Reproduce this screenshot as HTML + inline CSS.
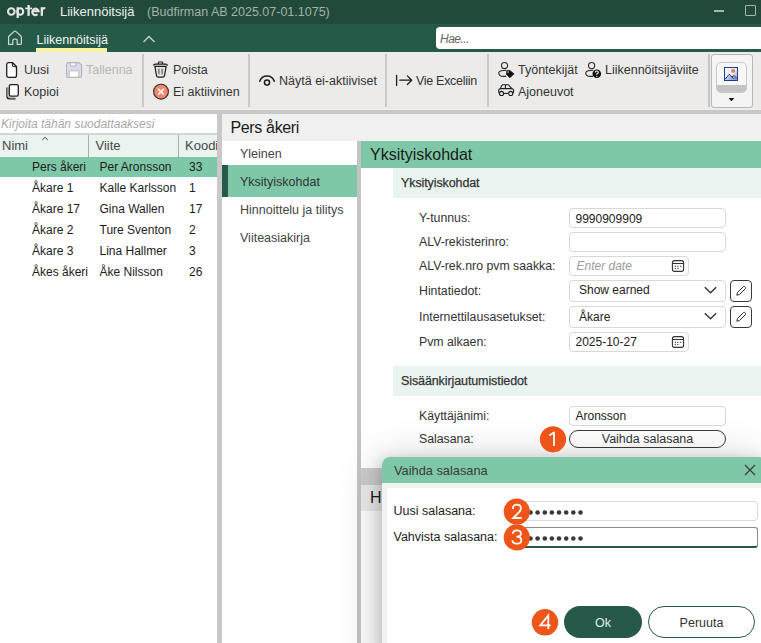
<!DOCTYPE html>
<html><head><meta charset="utf-8">
<style>
*{box-sizing:border-box;margin:0;padding:0}
html,body{width:761px;height:643px;overflow:hidden;background:#fff}
body{position:relative;font-family:"Liberation Sans",sans-serif;font-size:12.5px;color:#333}
.a{position:absolute;white-space:nowrap}
.t{position:absolute;white-space:nowrap;line-height:1}
.f12{font-size:12px}
.med{-webkit-text-stroke:0.25px currentColor;letter-spacing:-0.1px}
.inp{border:1px solid #d8d8d8;border-radius:4px;background:#fff}
</style></head><body>

<!-- TITLE BAR -->
<div class="a" style="left:0;top:0;width:761px;height:24px;background:#214a3b"></div>
<svg class="a" style="left:4px;top:2px" width="46" height="20" viewBox="4 2 46 20"><g fill="none" stroke="#e6e6e6" stroke-width="2.1"><circle cx="11.3" cy="11.5" r="3.3"/><path d="M17.7 7.2V18" stroke-width="2.3"/><ellipse cx="20.3" cy="11.5" rx="2.9" ry="3.3"/><path d="M28.6 5V15.9" stroke-width="2.3"/><path d="M25.2 8.4H32" stroke-width="1.7"/><path d="M32.3 11.3H38.6A3.2 3.25 0 1 0 37.6 14.3"/><path d="M41.8 7.2V15.9" stroke-width="2.3"/><path d="M41.8 10.6Q42.3 7.8 45.3 7.9" stroke-width="2"/></g></svg>
<div class="t" style="left:60px;top:5px;font-size:13px;color:#eef2f0">Liikennöitsijä</div>
<div class="t" style="left:147px;top:6px;font-size:12.5px;color:#a3b3ac">(Budfirman AB 2025.07-01.1075)</div>
<div class="a" style="left:714px;top:10px;width:10px;height:2px;background:#a9b5b0"></div>
<div class="a" style="left:745px;top:5px;width:11px;height:11px;border:1.6px solid #a9b5b0;border-radius:1px"></div>

<!-- TAB BAR -->
<div class="a" style="left:0;top:24px;width:761px;height:28px;background:#265a48"></div>
<svg class="a" style="left:0;top:24px" width="30" height="28" viewBox="0 24 30 28"><path d="M8.6 44.4V37.2Q8.6 36.5 9.1 36L14.2 31.4Q15 30.8 15.8 31.4L20.9 36Q21.4 36.5 21.4 37.2V43.6Q21.4 44.4 20.6 44.4H17.2V40.5Q17.2 39.2 16 39.2H14Q12.8 39.2 12.8 40.5V44.4H9.4Q8.6 44.4 8.6 43.6Z" fill="none" stroke="#cdd5d1" stroke-width="1.25" stroke-linejoin="round"/></svg>
<div class="t" style="left:36.5px;top:34px;font-size:12.5px;color:#f3f6f4">Liikennöitsijä</div>
<div class="a" style="left:36px;top:48px;width:71px;height:4px;background:#f6f3a6"></div>
<svg class="a" style="left:142px;top:34px" width="14" height="10" viewBox="0 0 14 10"><path d="M1.5 8L7 2.5 12.5 8" fill="none" stroke="#c9d3cf" stroke-width="1.3"/></svg>
<div class="a" style="left:436px;top:27px;width:340px;height:22px;background:#fff;border-radius:4px"></div>
<div class="t" style="left:440px;top:33px;font-size:12px;font-style:italic;letter-spacing:-0.5px;color:#666">Hae...</div>

<!-- RIBBON -->
<div class="a" style="left:0;top:52px;width:761px;height:57px;background:#ecebea"></div>
<div class="a" style="left:0;top:109px;width:761px;height:1px;background:#f1f1f0"></div>
<div class="a" style="left:0;top:110px;width:761px;height:4px;background:#c9c8c6"></div>


<!-- ribbon items -->
<svg class="a" style="left:0;top:52px" width="140" height="57" viewBox="0 52 140 57">
<path d="M8.4 62.7H12.6L16.5 66.6V75.4Q16.5 77.3 14.6 77.3H8.6Q6.7 77.3 6.7 75.4V64.6Q6.7 62.7 8.4 62.7Z" fill="#fff" stroke="#1e1e1e" stroke-width="1.3"/>
<path d="M12.4 62.9V65Q12.4 66.8 14.3 66.8H16.3" fill="none" stroke="#1e1e1e" stroke-width="1.1"/>
<path d="M6.9 87.5V96.2Q6.9 98.9 9.6 98.9H15.6" fill="none" stroke="#1e1e1e" stroke-width="1.2"/>
<path d="M8 88V95.6Q8 97.8 10.2 97.8H14.8" fill="none" stroke="#9a9a9a" stroke-width="0.9"/>
<rect x="9.3" y="84.6" width="9" height="11.6" rx="1.6" fill="#fff" stroke="#1e1e1e" stroke-width="1.3"/>
<path d="M68.2 62.6H79L81.6 65.2V75.8Q81.6 77.5 79.9 77.5H68.2Q66.5 77.5 66.5 75.8V64.3Q66.5 62.6 68.2 62.6Z" fill="#dcd9f0" stroke="#b4b4b4" stroke-width="1.1"/>
<rect x="70.6" y="62.9" width="5.2" height="3" fill="#fff" stroke="#b4b4b4" stroke-width="0.9"/>
<rect x="69.3" y="70.8" width="9.6" height="6.4" rx="0.8" fill="#fff" stroke="#b4b4b4" stroke-width="0.9"/>
</svg>
<div class="t" style="left:24px;top:64px;color:#333">Uusi</div>
<div class="t" style="left:86px;top:64px;color:#b6b6b6">Tallenna</div>
<div class="t" style="left:24px;top:86px;color:#333">Kopioi</div>

<div class="a" style="left:142px;top:54px;width:2px;height:53px;background:#c9c9c9"></div>

<svg class="a" style="left:150px;top:58px" width="22" height="44" viewBox="150 58 22 44">
<path d="M154.9 66.3L156.4 75.4Q156.7 77.1 158.4 77.1H162.6Q164.3 77.1 164.6 75.4L166.1 66.3Z" fill="#e2e2e2" stroke="#1e1e1e" stroke-width="1.2" stroke-linejoin="round"/>
<path d="M153.6 65.6Q153.8 64.1 155.4 64.1H165.6Q167.2 64.1 167.4 65.6" fill="none" stroke="#1e1e1e" stroke-width="1.3"/>
<path d="M158.3 64V62.8Q158.3 62 159.1 62H161.9Q162.7 62 162.7 62.8V64" fill="none" stroke="#1e1e1e" stroke-width="1.1"/>
<path d="M158.9 68.8V74.2M162.1 68.8V74.2" stroke="#555" stroke-width="1.1"/>
<circle cx="161" cy="91.7" r="7.4" fill="#f5896b" stroke="#2a2a2a" stroke-width="1.1"/>
<path d="M158.2 88.9L163.8 94.5M163.8 88.9L158.2 94.5" stroke="#fff" stroke-width="1.5"/>
</svg>
<div class="t" style="left:173px;top:64px;color:#333">Poista</div>
<div class="t" style="left:173px;top:86px;color:#333">Ei aktiivinen</div>

<div class="a" style="left:248px;top:54px;width:2px;height:53px;background:#c9c9c9"></div>

<svg class="a" style="left:255px;top:65px" width="40" height="30" viewBox="255 65 40 30">
<path d="M259.7 81.2A7.72 7.72 0 0 1 274.3 81.2" fill="none" stroke="#1e1e1e" stroke-width="1.5" stroke-linecap="round"/>
<circle cx="267" cy="82.6" r="2.55" fill="none" stroke="#1e1e1e" stroke-width="1.5"/>
</svg>
<div class="t" style="left:279px;top:75px;color:#333">Näytä ei-aktiiviset</div>

<div class="a" style="left:385px;top:54px;width:2px;height:53px;background:#c9c9c9"></div>

<svg class="a" style="left:390px;top:65px" width="26" height="30" viewBox="390 65 26 30">
<path d="M396.6 75.4V85.4" stroke="#1e1e1e" stroke-width="1.3" stroke-linecap="round"/>
<path d="M399.8 80.2H411.6M407.4 75.9L411.7 80.2 407.4 84.5" fill="none" stroke="#1e1e1e" stroke-width="1.3" stroke-linecap="round" stroke-linejoin="round"/>
</svg>
<div class="t" style="left:416px;top:75px;letter-spacing:-0.3px;color:#333">Vie Exceliin</div>

<div class="a" style="left:487px;top:54px;width:2px;height:53px;background:#c9c9c9"></div>

<svg class="a" style="left:494px;top:58px" width="112" height="42" viewBox="494 58 112 42">
<circle cx="504.5" cy="65.6" r="3.05" fill="none" stroke="#2a2a2a" stroke-width="1.1"/>
<path d="M506.3 70.3Q500 70.4 498.9 72.2Q498.3 74 499.7 75.3Q500.9 76.4 503.5 76.4H506.3" fill="none" stroke="#2a2a2a" stroke-width="1.1"/>
<path d="M506.9 70.8H510L513.6 73.9 509.8 77.4 506.8 74.2Z" fill="#111" stroke="#111" stroke-width="1.1" stroke-linejoin="round"/>
<circle cx="508.1" cy="72" r="0.75" fill="#eee"/>
<circle cx="591.6" cy="65.6" r="3.1" fill="none" stroke="#2a2a2a" stroke-width="1.1"/>
<path d="M593.3 70.3Q587 70.4 585.9 72.2Q585.3 74 586.7 75.3Q587.9 76.4 590.5 76.4H593" fill="none" stroke="#2a2a2a" stroke-width="1.1"/>
<circle cx="596.8" cy="73.8" r="4.3" fill="#111"/>
<path d="M595.3 72.6Q595.3 71 596.8 71Q598.3 71 598.3 72.4Q598.3 73.3 596.8 73.9V74.8" fill="none" stroke="#fff" stroke-width="1.1"/>
<circle cx="596.8" cy="76.3" r="0.65" fill="#fff"/>
<path d="M500.4 88.6L501.6 85.8Q502.1 84.7 503.2 84.7H507.8Q508.9 84.7 509.4 85.8L511.8 88.6" fill="none" stroke="#1e1e1e" stroke-width="1.1" stroke-linejoin="round"/>
<path d="M505.4 84.8V88.6" stroke="#1e1e1e" stroke-width="1.1"/>
<path d="M499.2 93.2Q498.7 92.6 498.7 91.6V90.6Q498.7 88.6 500.8 88.6H511.4Q513.6 88.6 513.6 90.6V91.6Q513.6 92.6 513.1 93.2" fill="none" stroke="#1e1e1e" stroke-width="1.1"/>
<path d="M503.6 93.4H508.6" stroke="#1e1e1e" stroke-width="1.1"/>
<circle cx="501.5" cy="93.4" r="2.05" fill="#ededed" stroke="#1e1e1e" stroke-width="1.1"/>
<circle cx="510.7" cy="93.4" r="2.05" fill="#ededed" stroke="#1e1e1e" stroke-width="1.1"/>
</svg>
<div class="t" style="left:518px;top:64px;color:#333">Työntekijät</div>
<div class="t" style="left:605px;top:64px;color:#333">Liikennöitsijäviite</div>
<div class="t" style="left:518px;top:86px;color:#333">Ajoneuvot</div>

<div class="a" style="left:708px;top:54px;width:1.5px;height:53px;background:#c4c4c4"></div>
<div class="a" style="left:711px;top:54px;width:42px;height:54px;background:#f4f4f4;border:1px solid #b8b8b8;border-radius:3px"></div>
<div class="a" style="left:716px;top:62px;width:31px;height:31px;border-radius:5px;border:1px solid #c8c8c8;background:linear-gradient(#f7f7f7 0,#f7f7f7 22px,#c4c4c4 22px,#c4c4c4 100%)"></div>
<svg class="a" style="left:720px;top:62px" width="22" height="42" viewBox="720 62 22 42"><defs><linearGradient id="g1" x1="0" y1="0" x2="1" y2="1"><stop offset="0" stop-color="#ffffff"/><stop offset="0.55" stop-color="#dfe7f7"/><stop offset="1" stop-color="#7f9bd6"/></linearGradient><linearGradient id="g2" x1="0" y1="0" x2="1" y2="1"><stop offset="0" stop-color="#f4f7fd"/><stop offset="1" stop-color="#5f7fc4"/></linearGradient></defs>
<rect x="724.5" y="67.5" width="13" height="13" fill="url(#g1)" stroke="#1c3d8f" stroke-width="1"/>
<path d="M725 79.5L729.2 74.3 733 77.4 734.2 76.4 737 79.5Z" fill="url(#g2)"/>
<path d="M725 79.3L729.2 74.3 733.6 78.6M731.8 76.9L734.2 75.6 737 78.6" fill="none" stroke="#1a2a50" stroke-width="0.9"/>
<circle cx="733.2" cy="70.8" r="1.9" fill="#ee6a2a"/><circle cx="733.2" cy="70.8" r="0.8" fill="#fbb27a"/>
<path d="M728.6 98H734.4L731.5 101.2Z" fill="#111"/>
</svg>

<!-- LEFT LIST -->
<div class="a" style="left:0;top:114px;width:217px;height:529px;background:#fff"></div>
<div class="t f12" style="left:1px;top:118px;font-style:italic;color:#a8a8a8">Kirjoita tähän suodattaaksesi</div>
<div class="a" style="left:0;top:133px;width:217px;height:1.5px;background:#d6d6d6"></div>
<div class="a" style="left:0;top:134.5px;width:217px;height:22.5px;background:#e9f3ef"></div>
<div class="a" style="left:88px;top:135px;width:1px;height:22px;background:#a9aeac"></div>
<div class="a" style="left:178px;top:135px;width:1px;height:22px;background:#a9aeac"></div>
<svg class="a" style="left:41px;top:136px" width="8" height="5" viewBox="0 0 8 5"><path d="M1.2 4L4 1.3 6.8 4" fill="none" stroke="#444" stroke-width="1"/></svg>
<div class="t f12" style="left:2px;top:139px;font-size:13px;color:#474747">Nimi</div>
<div class="t f12" style="left:95.5px;top:139px;font-size:13px;color:#474747">Viite</div>
<div class="t f12" style="left:185px;top:139px;font-size:13px;color:#474747">Koodi</div>
<div class="a" style="left:0;top:157px;width:217px;height:20px;background:#7ec8a8"></div>
<div class="t f12" style="left:32px;top:161px;color:#1c1c1c">Pers åkeri</div><div class="t f12" style="left:99.5px;top:161px;color:#1c1c1c">Per Aronsson</div><div class="t f12" style="left:189px;top:161px;color:#1c1c1c">33</div>
<div class="t f12" style="left:32px;top:182px;color:#1c1c1c">Åkare 1</div><div class="t f12" style="left:99.5px;top:182px;color:#1c1c1c">Kalle Karlsson</div><div class="t f12" style="left:189px;top:182px;color:#1c1c1c">1</div>
<div class="t f12" style="left:32px;top:203px;color:#1c1c1c">Åkare 17</div><div class="t f12" style="left:99.5px;top:203px;color:#1c1c1c">Gina Wallen</div><div class="t f12" style="left:189px;top:203px;color:#1c1c1c">17</div>
<div class="t f12" style="left:32px;top:224px;color:#1c1c1c">Åkare 2</div><div class="t f12" style="left:99.5px;top:224px;color:#1c1c1c">Ture Sventon</div><div class="t f12" style="left:189px;top:224px;color:#1c1c1c">2</div>
<div class="t f12" style="left:32px;top:245px;color:#1c1c1c">Åkare 3</div><div class="t f12" style="left:99.5px;top:245px;color:#1c1c1c">Lina Hallmer</div><div class="t f12" style="left:189px;top:245px;color:#1c1c1c">3</div>
<div class="t f12" style="left:32px;top:266px;color:#1c1c1c">Åkes åkeri</div><div class="t f12" style="left:99.5px;top:266px;color:#1c1c1c">Åke Nilsson</div><div class="t f12" style="left:189px;top:266px;color:#1c1c1c">26</div>

<!-- SPLITTER -->
<div class="a" style="left:217px;top:114px;width:5px;height:529px;background:#c8c8c8"></div>

<!-- RIGHT PANEL -->
<div class="a" style="left:222px;top:114px;width:539px;height:27px;background:#f0f0f0"></div>
<div class="t" style="left:230.5px;top:120px;font-size:16px;letter-spacing:-0.35px;color:#1a1a1a">Pers åkeri</div>
<div class="a" style="left:222px;top:141px;width:135px;height:502px;background:#fff"></div>
<div class="t" style="left:240px;top:148px;color:#444">Yleinen</div>
<div class="a" style="left:222px;top:165px;width:135px;height:32px;background:#7ec8a8"></div>
<div class="a" style="left:222px;top:165px;width:6px;height:32px;background:#26594a"></div>
<div class="t" style="left:240px;top:176px;color:#333">Yksityiskohdat</div>
<div class="t" style="left:240px;top:204px;color:#444">Hinnoittelu ja tilitys</div>
<div class="t" style="left:240px;top:232px;color:#444">Viiteasiakirja</div>
<div class="a" style="left:357px;top:141px;width:4px;height:502px;background:#c4c4c4"></div>

<div class="a" style="left:361px;top:141px;width:400px;height:502px;background:#fff"></div>
<div class="a" style="left:361px;top:141px;width:400px;height:27px;background:#7ec8a8"></div>
<div class="t" style="left:370px;top:147px;font-size:16px;color:#1a1a1a">Yksityiskohdat</div>
<div class="a" style="left:393px;top:168px;width:368px;height:30px;background:#e9f3ef"></div>
<div class="t med" style="left:401px;top:177px;color:#333">Yksityiskohdat</div>

<div class="t" style="left:419px;top:212px;font-size:12.3px;color:#333">Y-tunnus:</div>
<div class="t" style="left:419px;top:236px;font-size:12.3px;color:#333">ALV-rekisterinro:</div>
<div class="t" style="left:419px;top:260px;font-size:12.3px;color:#333">ALV-rek.nro pvm saakka:</div>
<div class="t" style="left:419px;top:285px;font-size:12.3px;color:#333">Hintatiedot:</div>
<div class="t" style="left:419px;top:311px;font-size:12.3px;color:#333">Internettilausasetukset:</div>
<div class="t" style="left:419px;top:336px;font-size:12.3px;color:#333">Pvm alkaen:</div>

<div class="a inp" style="left:569px;top:208px;width:157px;height:20px"></div>
<div class="t f12" style="left:575.5px;top:213px;color:#222">9990909909</div>
<div class="a inp" style="left:569px;top:232px;width:157px;height:20px"></div>
<div class="a inp" style="left:569px;top:256px;width:120px;height:20px"></div>
<div class="t f12" style="left:576.5px;top:260px;font-style:italic;color:#9c9c9c">Enter date</div>
<svg class="a" style="left:671px;top:259px" width="14" height="14" viewBox="0 0 14 14"><rect x="1.4" y="1.6" width="11.2" height="10.8" rx="2.2" fill="none" stroke="#333" stroke-width="1.1"/><path d="M1.6 4.5H12.4" stroke="#333" stroke-width="1"/><g fill="#555"><circle cx="4.3" cy="7.25" r="0.75"/><circle cx="6.9" cy="7.25" r="0.75"/><circle cx="9.8" cy="7.25" r="0.75"/><circle cx="4.3" cy="9.6" r="0.75"/><circle cx="6.9" cy="9.6" r="0.75"/></g></svg>
<div class="a inp" style="left:569px;top:280px;width:157px;height:22px"></div>
<div class="t f12" style="left:579px;top:284px;color:#222">Show earned</div>
<svg class="a" style="left:703px;top:285px" width="15" height="10" viewBox="0 0 15 10"><path d="M1.8 2.2L7.5 7.8 13.2 2.2" fill="none" stroke="#333" stroke-width="1.4"/></svg>
<div class="a" style="left:730px;top:280px;width:22px;height:22px;border:1px solid #3a3a3a;border-radius:4px;background:#fff"></div><svg class="a" style="left:734px;top:284px" width="14" height="14" viewBox="0 0 14 14"><path d="M2.8 11.2L3.4 8.6 9.4 2.6Q10.1 1.9 10.8 2.6L11.4 3.2Q12.1 3.9 11.4 4.6L5.4 10.6Z" fill="none" stroke="#333" stroke-width="1"/></svg>
<div class="a inp" style="left:569px;top:306px;width:157px;height:22px"></div>
<div class="t f12" style="left:579px;top:311px;color:#222">Åkare</div>
<svg class="a" style="left:703px;top:311px" width="15" height="10" viewBox="0 0 15 10"><path d="M1.8 2.2L7.5 7.8 13.2 2.2" fill="none" stroke="#333" stroke-width="1.4"/></svg>
<div class="a" style="left:730px;top:306px;width:22px;height:22px;border:1px solid #3a3a3a;border-radius:4px;background:#fff"></div><svg class="a" style="left:734px;top:310px" width="14" height="14" viewBox="0 0 14 14"><path d="M2.8 11.2L3.4 8.6 9.4 2.6Q10.1 1.9 10.8 2.6L11.4 3.2Q12.1 3.9 11.4 4.6L5.4 10.6Z" fill="none" stroke="#333" stroke-width="1"/></svg>
<div class="a inp" style="left:569px;top:332px;width:120px;height:20px"></div>
<div class="t f12" style="left:575.5px;top:336px;color:#222">2025-10-27</div>
<svg class="a" style="left:671px;top:335px" width="14" height="14" viewBox="0 0 14 14"><rect x="1.4" y="1.6" width="11.2" height="10.8" rx="2.2" fill="none" stroke="#333" stroke-width="1.1"/><path d="M1.6 4.5H12.4" stroke="#333" stroke-width="1"/><g fill="#555"><circle cx="4.3" cy="7.25" r="0.75"/><circle cx="6.9" cy="7.25" r="0.75"/><circle cx="9.8" cy="7.25" r="0.75"/><circle cx="4.3" cy="9.6" r="0.75"/><circle cx="6.9" cy="9.6" r="0.75"/></g></svg>

<div class="a" style="left:393px;top:366px;width:368px;height:30px;background:#e9f3ef"></div>
<div class="t med" style="left:401px;top:375px;color:#333">Sisäänkirjautumistiedot</div>
<div class="t" style="left:419px;top:410px;font-size:12.3px;color:#333">Käyttäjänimi:</div>
<div class="t" style="left:419px;top:433px;font-size:12.3px;color:#333">Salasana:</div>
<div class="a inp" style="left:569px;top:406px;width:157px;height:20px"></div>
<div class="t f12" style="left:575.5px;top:410px;color:#222">Aronsson</div>
<div class="a" style="left:569px;top:430px;width:157px;height:18px;border:1.5px solid #3a3a3a;border-radius:9px;background:#fff"></div>
<div class="t" style="left:569px;top:433px;width:157px;text-align:center;color:#333">Vaihda salasana</div>

<!-- behind dialog -->
<div class="a" style="left:361px;top:467.5px;width:400px;height:17px;background:#cdcdcd"></div>
<div class="a" style="left:361px;top:484.5px;width:400px;height:26.5px;background:#ececec"></div>
<div class="t" style="left:370px;top:490px;font-size:16px;color:#1a1a1a">H</div>

<!-- DIALOG SHADOW -->
<div class="a" style="left:382px;top:457px;width:385px;height:220px;border-radius:8px 8px 0 0;box-shadow:-2px 2px 14px rgba(0,0,0,0.16),-4px 4px 44px rgba(0,0,0,0.2)"></div>
<!-- DIALOG -->
<div class="a" style="left:382px;top:457px;width:385px;height:220px;background:#f2f2f2;border-radius:8px 8px 0 0;overflow:hidden">
  <div class="a" style="left:0;top:0;width:385px;height:26px;background:#7ec8a8"></div>
  <div class="a" style="left:5px;top:31px;width:380px;height:190px;background:#fff"></div>
</div>
<div class="t" style="left:394px;top:465px;font-size:12.8px;color:#3a3a3a">Vaihda salasana</div>
<svg class="a" style="left:740px;top:460px" width="20" height="20" viewBox="740 460 20 20"><path d="M745 465L755 475M755 465L745 475" stroke="#3a3a3a" stroke-width="1.1"/></svg>
<div class="t" style="left:393.5px;top:505px;color:#1c1c1c">Uusi salasana:</div>
<div class="t" style="left:393.5px;top:531px;color:#1c1c1c">Vahvista salasana:</div>
<div class="a inp" style="left:522px;top:501px;width:236px;height:20px"></div>
<div class="a" style="left:522px;top:527px;width:236px;height:21px;border:1px solid #8c8c8c;border-bottom:2px solid #26594a;border-radius:3px"></div>
<svg class="a" style="left:526px;top:509px" width="60" height="7" viewBox="0 0 60 7"><g fill="#3a3a3a"><circle cx="4.5" cy="3.5" r="2.3"/><circle cx="11.6" cy="3.5" r="2.3"/><circle cx="18.8" cy="3.5" r="2.3"/><circle cx="25.9" cy="3.5" r="2.3"/><circle cx="33" cy="3.5" r="2.3"/><circle cx="40.2" cy="3.5" r="2.3"/><circle cx="47.3" cy="3.5" r="2.3"/><circle cx="54.5" cy="3.5" r="2.3"/></g></svg>
<svg class="a" style="left:526px;top:535px" width="60" height="7" viewBox="0 0 60 7"><g fill="#3a3a3a"><circle cx="4.5" cy="3.5" r="2.3"/><circle cx="11.6" cy="3.5" r="2.3"/><circle cx="18.8" cy="3.5" r="2.3"/><circle cx="25.9" cy="3.5" r="2.3"/><circle cx="33" cy="3.5" r="2.3"/><circle cx="40.2" cy="3.5" r="2.3"/><circle cx="47.3" cy="3.5" r="2.3"/><circle cx="54.5" cy="3.5" r="2.3"/></g></svg>
<div class="a" style="left:564px;top:606px;width:78px;height:32px;border-radius:16px;background:#26594a"></div>
<div class="t" style="left:564px;top:617px;width:78px;text-align:center;color:#e2ede8">Ok</div>
<div class="a" style="left:648px;top:606px;width:107px;height:32px;border-radius:16px;background:#fff;border:1px solid #26594a"></div>
<div class="t" style="left:648px;top:617px;width:107px;text-align:center;color:#333">Peruuta</div>

<!-- BADGES -->
<svg class="a" style="left:500px;top:420px" width="70" height="220" viewBox="500 420 70 220">
<g fill="#ef5519"><circle cx="553" cy="439.3" r="13.1"/><circle cx="516.8" cy="511.5" r="13.1"/><circle cx="516.8" cy="537.4" r="13.1"/><circle cx="545" cy="622.3" r="13.2"/></g>
<g fill="none" stroke="#fff" stroke-width="1.8" stroke-linejoin="round">
<path d="M549.3 435.6L554 432.4V446"/>
<path d="M512.9 508.9Q512.9 504.7 516.9 504.7Q520.9 504.7 520.9 508.2Q520.9 510.1 519 512.2L513.2 518H521.7" stroke-linejoin="miter"/>
<path d="M512.8 533.8Q512.9 530.4 516.9 530.4Q520.9 530.4 520.9 533.7Q520.9 536.7 516.4 536.7M516.4 536.7Q521.3 536.7 521.3 540.2Q521.3 543.7 516.9 543.7Q512.6 543.7 512.4 540.2" stroke-linejoin="miter"/>
<path d="M548.3 629V615.4L540.4 625.3H550.6" stroke-linejoin="miter"/>
</g></svg>
</body></html>
